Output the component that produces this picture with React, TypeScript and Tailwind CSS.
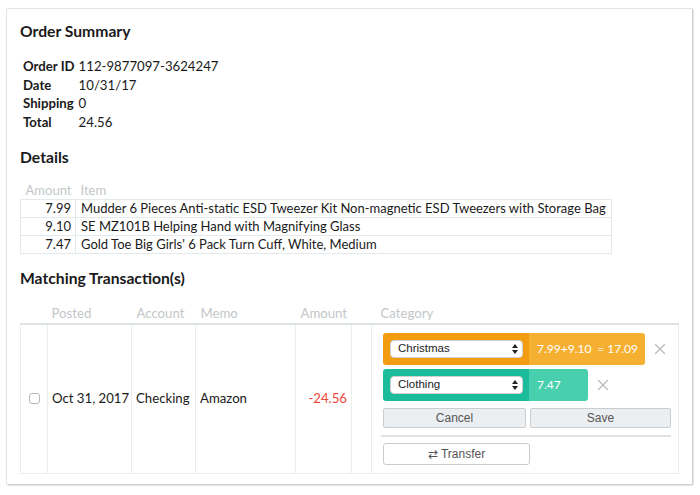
import { X } from "lucide-react";

const details = [
  { amount: "7.99", item: "Mudder 6 Pieces Anti-static ESD Tweezer Kit Non-magnetic ESD Tweezers with Storage Bag" },
  { amount: "9.10", item: "SE MZ101B Helping Hand with Magnifying Glass" },
  { amount: "7.47", item: "Gold Toe Big Girls' 6 Pack Turn Cuff, White, Medium" },
];

const sys = { fontFamily: '"Liberation Sans", Arial, sans-serif' };

function SelectBox({ label }: { label: string }) {
  return (
    <div
      className="flex h-[18px] w-[133px] items-center justify-between rounded-[4px] border border-[#d0d0d0] bg-white pl-[7px] pr-[4px] text-[11.5px] text-[#222]"
      style={sys}
    >
      <span>{label}</span>
      <svg width="6" height="10" viewBox="0 0 6 10">
        <path d="M0 4 L3 0 L6 4 Z" fill="#222" />
        <path d="M0 6 L3 10 L6 6 Z" fill="#222" />
      </svg>
    </div>
  );
}

export default function App() {
  return (
    <div className="min-h-[495px] bg-white pt-[8px] pl-[6px] font-['Lato',sans-serif] text-[#1a1a1a]">
      <div className="w-[687px] h-[477px] rounded-[2px] border border-[#dfe3e4] border-r-[#cfd3d4] border-b-[#cfd3d4] shadow-[1px_1px_0_#e4e4e4] bg-white px-[13px]">
        <h2 className="mt-[12px] text-[15.7px] font-bold leading-[20px]">Order Summary</h2>

        <table className="mt-[16px] ml-[3px] text-[13.2px] leading-[18.7px]">
          <tbody>
            <tr><td className="pr-[4px] font-bold">Order ID</td><td>112-9877097-3624247</td></tr>
            <tr><td className="pr-[4px] font-bold">Date</td><td>10/31/17</td></tr>
            <tr><td className="pr-[4px] font-bold">Shipping</td><td>0</td></tr>
            <tr><td className="pr-[4px] font-bold">Total</td><td>24.56</td></tr>
          </tbody>
        </table>

        <h2 className="mt-[15px] text-[15.7px] font-bold leading-[20px]">Details</h2>

        <table className="mt-[15px] w-[592px] border-collapse text-[13px] leading-[17px] table-fixed">
          <thead>
            <tr className="text-[#c3c7ca]">
              <th className="w-[55px] pr-[4px] text-right font-normal">Amount</th>
              <th className="pl-[5px] text-left font-normal">Item</th>
            </tr>
          </thead>
          <tbody>
            {details.map((d) => (
              <tr key={d.amount}>
                <td className="border border-[#e3eaec] pr-[4px] text-right">{d.amount}</td>
                <td className="border border-[#e3eaec] pl-[5px] whitespace-nowrap">{d.item}</td>
              </tr>
            ))}
          </tbody>
        </table>

        <h2 className="mt-[14px] text-[15.7px] font-bold leading-[20px]">Matching Transaction(s)</h2>

        <table className="mt-[16px] w-[659px] border-collapse table-fixed text-[13.2px]">
          <thead>
            <tr className="text-[#c3c7ca] border-b-2 border-[#dde2e4] leading-[18px]">
              <th className="w-[27px]" />
              <th className="w-[84px] pl-[4px] pb-[1px] text-left font-normal">Posted</th>
              <th className="w-[64px] pl-[5px] text-left font-normal">Account</th>
              <th className="w-[100px] pl-[5px] text-left font-normal">Memo</th>
              <th className="w-[56px] pl-[5px] text-left font-normal">Amount</th>
              <th className="w-[20px]" />
              <th className="pl-[9px] text-left font-normal">Category</th>
            </tr>
          </thead>
          <tbody>
            <tr className="h-[148px]">
              <td className="border border-[#e8eef0] text-center align-middle">
                <div className="mx-auto h-[11px] w-[11px] rounded-[3px] border border-[#b8b8b8] bg-white" />
              </td>
              <td className="border border-[#e8eef0] pl-[4px] whitespace-nowrap">Oct 31, 2017</td>
              <td className="border border-[#e8eef0] pl-[4px]">Checking</td>
              <td className="border border-[#e8eef0] pl-[4px]">Amazon</td>
              <td className="border border-[#e8eef0] pr-[4px] text-right text-[#f0473a]">-24.56</td>
              <td className="border border-[#e8eef0]" />
              <td className="border border-[#e8eef0] pl-[11px] pr-[6px] py-[8px] align-top">
                <div className="flex items-center">
                  <div className="flex h-[32px] w-[262px] overflow-hidden rounded-[3px]">
                    <div className="flex w-[146px] items-center bg-[#f39c12] pl-[7px]">
                      <SelectBox label="Christmas" />
                    </div>
                    <div className="flex flex-1 items-center justify-between whitespace-nowrap bg-[#f5b031] pl-[8px] pr-[7px] text-[12px] text-white">
                      <span>7.99+9.10</span>
                      <span><span className="text-[#fde3b5]">=</span> 17.09</span>
                    </div>
                  </div>
                  <X className="ml-[6px] h-[18px] w-[18px] text-[#b9b9b9]" strokeWidth={1.6} />
                </div>
                <div className="mt-[4px] flex items-center">
                  <div className="flex h-[32px] w-[205px] overflow-hidden rounded-[3px]">
                    <div className="flex w-[146px] items-center bg-[#1abc9c] pl-[7px]">
                      <SelectBox label="Clothing" />
                    </div>
                    <div className="flex flex-1 items-center bg-[#48cfad] pl-[8px] text-[12px] text-white">
                      <span>7.47</span>
                    </div>
                  </div>
                  <X className="ml-[6px] h-[18px] w-[18px] text-[#b9b9b9]" strokeWidth={1.6} />
                </div>
                <div className="mt-[7px] flex gap-[4px] pr-[1px]" style={sys}>
                  <button className="h-[20px] w-[144px] rounded-[2px] border border-[#c9cdd0] bg-[#eceff1] text-[12px] text-[#555]">Cancel</button>
                  <button className="h-[20px] w-[142px] rounded-[2px] border border-[#c9cdd0] bg-[#eceff1] text-[12px] text-[#555]">Save</button>
                </div>
                <div className="mt-[7px] mr-[1px] -ml-[2px] border-t-2 border-[#dfe3e5]" />
                <button
                  className="mt-[6px] h-[22px] w-[147px] rounded-[3px] border border-[#c9cdd0] bg-white text-[12px] text-[#555]"
                  style={sys}
                >
                  ⇄ Transfer
                </button>
              </td>
            </tr>
          </tbody>
        </table>
      </div>
    </div>
  );
}
